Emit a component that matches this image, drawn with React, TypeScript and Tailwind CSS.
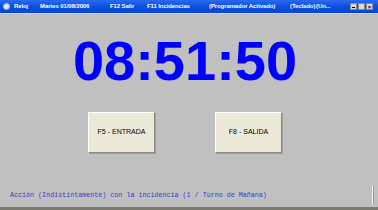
export default function App() {
  const title = [
    { t: "Reloj", w: "w-[26px]" },
    { t: "Martes 01/08/2006", w: "w-[70px]" },
    { t: "F12 Salir", w: "w-[37px]" },
    { t: "F11 Incidencias", w: "w-[62px]" },
    { t: "(Programador Activado)", w: "w-[81px]" },
    { t: "(Teclado)", w: "w-[26px]" },
    { t: "(Un...", w: "w-[30px]" },
  ];

  return (
    <div className="relative flex h-[210px] w-[378px] flex-col overflow-hidden bg-[#c0c0c0] font-['Liberation_Sans',sans-serif]">
      {/* title bar */}
      <div className="flex h-[13px] items-center bg-gradient-to-b from-[#2a6af0] via-[#0a50e0] to-[#0846d0] text-[6px] font-bold text-white">
        <div className="ml-[3px] mr-[4px] h-[7px] w-[7px] rounded-full border border-[#9fb8e8] bg-[#dfe8f5]" />
        {title.map((i) => (
          <span key={i.t} className={`${i.w} shrink-0 overflow-hidden whitespace-nowrap tracking-[-0.1px]`}>
            {i.t}
          </span>
        ))}
        <div className="ml-auto mr-[5px] flex gap-[1px]">
          <div className="flex h-[7px] w-[7px] items-end justify-center border border-[#8a8a8a] bg-[#d8d8d8] pb-[1px]">
            <div className="h-[1px] w-[3px] bg-black" />
          </div>
          <div className="h-[7px] w-[7px] border border-[#8a8a8a] bg-[#d8d8d8]" />
          <div className="flex h-[7px] w-[7px] items-center justify-center border border-[#8a8a8a] bg-[#d8d8d8] text-[6px] leading-none text-black">
            ×
          </div>
        </div>
      </div>
      <div className="h-[1px] bg-[#d4d4d4]" />

      {/* clock */}
      <div className="mt-[19px] flex justify-center pr-[8px]">
        <span className="text-[56px] font-bold leading-[56px] text-[#0000ff]">08:51:50</span>
      </div>

      {/* buttons */}
      <div className="mt-[23px] flex justify-center gap-[60px] pr-[8px]">
        {["F5 - ENTRADA", "F8 - SALIDA"].map((b) => (
          <div
            key={b}
            className="flex h-[41px] w-[67px] items-center justify-center border border-t-white border-l-white border-r-[#8a8a80] border-b-[#8a8a80] bg-[#ece9d8] text-[7px] text-black shadow-[1px_1px_0_#a0a098]"
          >
            {b}
          </div>
        ))}
      </div>

      {/* footer */}
      <div className="mt-[38px] pl-[10px] font-['Liberation_Mono',monospace] text-[6.7px] leading-[8px] text-[#3a3acc] whitespace-nowrap">
        Acción (Indistintamente) con la incidencia (1 / Turno de Mañana)
      </div>
      <div className="absolute right-[4px] top-[186px] h-[19px] w-[2px] border-l border-[#f4f4f4] bg-[#9a9a9a]" />
      <div className="absolute bottom-0 left-0 h-[3px] w-full bg-[#7a7a6e]" />
    </div>
  );
}
